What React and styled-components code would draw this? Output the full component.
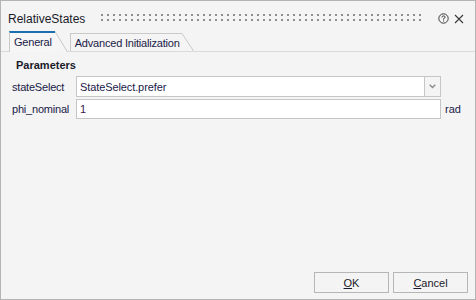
import React from 'react';
import styled, { createGlobalStyle } from 'styled-components';

const GlobalStyle = createGlobalStyle`
  html, body {
    margin: 0;
    padding: 0;
    background: #f4f4f4;
  }
  body {
    font-family: "Liberation Sans", Arial, sans-serif;
    font-size: 11px;
    color: #1a1a48;
  }
`;

const Window = styled.div`
  box-sizing: border-box;
  width: 476px;
  height: 300px;
  border: 1px solid #b4b4b4;
  background: #f4f4f4;
  display: flex;
  flex-direction: column;
`;

const TitleBar = styled.div`
  display: flex;
  align-items: center;
  height: 29px;
  padding: 0 8px 0 7px;
`;

const Title = styled.div`
  font-size: 12px;
  color: #1a1a2a;
  padding-top: 6px;
`;

const Grip = styled.div`
  flex: 1;
  height: 10px;
  margin: 6px 10px 0 16px;
  background-image: radial-gradient(circle at 1px 1px, #8e8e8e 1px, transparent 1.3px);
  background-size: 6px 5px;
`;

const IconBtn = styled.div`
  width: 16px;
  height: 14px;
  display: flex;
  align-items: center;
  justify-content: center;
  margin-top: 6px;
`;

const TabStrip = styled.div`
  display: flex;
  align-items: flex-end;
  height: 21px;
  padding-left: 8px;
  border-bottom: 1px solid #dadada;
  gap: 2px;
`;

const Tab = styled.div`
  display: flex;
  align-items: stretch;
  height: ${p => (p.active ? '21px' : '18px')};
  margin-bottom: ${p => (p.active ? '-1px' : '0')};
`;

const TabFace = styled.div`
  display: flex;
  align-items: center;
  box-sizing: border-box;
  padding: ${p => (p.active ? '0 3px 1px 4px' : '0 2px 0 4px')};
  background: ${p => (p.active ? '#f6f6f6' : '#f4f4f4')};
  border-left: 1px solid #c9c9c9;
  border-top: ${p => (p.active ? '2px solid #1c6fae' : '1px solid #c9c9c9')};
  color: #1a1a48;
  font-size: 11px;
  letter-spacing: -0.2px;
  white-space: nowrap;
`;

const Slant = styled.svg`
  display: block;
  flex: none;
`;

const Body = styled.div`
  flex: 1;
  padding: 7px 0 0 11px;
  display: flex;
  flex-direction: column;
`;

const Section = styled.div`
  font-weight: bold;
  font-size: 11px;
  line-height: 13px;
  color: #1a1a2a;
  padding-left: 4px;
  margin-bottom: 4px;
`;

const Grid = styled.div`
  display: grid;
  grid-template-columns: 64px 365px 1fr;
  column-gap: 0;
  row-gap: 2px;
  align-items: center;
`;

const Label = styled.div`
  font-size: 11px;
  color: #1a1a48;
  letter-spacing: -0.2px;
  white-space: nowrap;
`;

const Field = styled.div`
  display: flex;
  height: ${p => p.h || 20}px;
  box-sizing: border-box;
  border: 1px solid #c6c6c6;
  background: #fff;
  align-items: center;
  padding-left: 3px;
  font-size: 11px;
  color: ${p => p.value ? '#3a1a50' : '#1a1a48'};
`;

const FieldText = styled.div`
  flex: 1;
  letter-spacing: -0.1px;
`;

const DropBtn = styled.div`
  width: 16px;
  height: 100%;
  box-sizing: border-box;
  border-left: 1px solid #c6c6c6;
  background: #f4f4f4;
  display: flex;
  align-items: center;
  justify-content: center;
`;

const Unit = styled.div`
  font-size: 11px;
  color: #1a1a48;
  padding-left: 4px;
`;

const Footer = styled.div`
  display: flex;
  justify-content: flex-end;
  gap: 4px;
  padding: 0 7px 6px 0;
`;

const Button = styled.div`
  width: 75px;
  height: 21px;
  box-sizing: border-box;
  border: 1px solid #b6b6b6;
  background: #f4f4f4;
  display: flex;
  align-items: center;
  justify-content: center;
  font-size: 11px;
  color: #1a1a2a;
  u { text-decoration: underline; }
`;

function TabSlant({ h, w }) {
  return (
    <Slant width={w} height={h} viewBox={`0 0 ${w} ${h}`}>
      <path d={`M0 0 L${w - 1} ${h} L0 ${h} Z`} fill="#f5f5f5" />
      <path d={`M0 0.5 L${w - 0.5} ${h}`} stroke="#c9c9c9" strokeWidth="1" fill="none" />
    </Slant>
  );
}

export default function App() {
  return (
    <>
      <GlobalStyle />
      <Window>
        <TitleBar>
          <Title>RelativeStates</Title>
          <Grip />
          <IconBtn>
            <svg width="11" height="11" viewBox="0 0 11 11">
              <circle cx="5.5" cy="5.5" r="4.7" fill="none" stroke="#3a3a3a" strokeWidth="1" />
              <path d="M3.9 4.4 Q3.9 2.9 5.5 2.9 Q7.1 2.9 7.1 4.2 Q7.1 5.1 5.6 5.5 L5.6 6.6" fill="none" stroke="#3a3a3a" strokeWidth="1" />
              <rect x="5.1" y="7.4" width="1" height="1.1" fill="#3a3a3a" />
            </svg>
          </IconBtn>
          <IconBtn>
            <svg width="10" height="10" viewBox="0 0 10 10">
              <path d="M1 1 L9 9 M9 1 L1 9" stroke="#3a3a3a" strokeWidth="1.1" />
            </svg>
          </IconBtn>
        </TitleBar>
        <TabStrip>
          <Tab active>
            <TabFace active>General</TabFace>
            <TabSlant w={13} h={21} />
          </Tab>
          <Tab>
            <TabFace>Advanced Initialization</TabFace>
            <TabSlant w={12} h={18} />
          </Tab>
        </TabStrip>
        <Body>
          <Section>Parameters</Section>
          <Grid>
            <Label>stateSelect</Label>
            <Field h={21}>
              <FieldText>StateSelect.prefer</FieldText>
              <DropBtn>
                <svg width="7" height="5" viewBox="0 0 7 5">
                  <path d="M0.7 0.7 L3.5 3.5 L6.3 0.7" fill="none" stroke="#8a8a8a" strokeWidth="1.4" />
                </svg>
              </DropBtn>
            </Field>
            <Unit />
            <Label>phi_nominal</Label>
            <Field h={20} value>
              <FieldText>1</FieldText>
            </Field>
            <Unit>rad</Unit>
          </Grid>
        </Body>
        <Footer>
          <Button><u>O</u>K</Button>
          <Button><u>C</u>ancel</Button>
        </Footer>
      </Window>
    </>
  );
}
